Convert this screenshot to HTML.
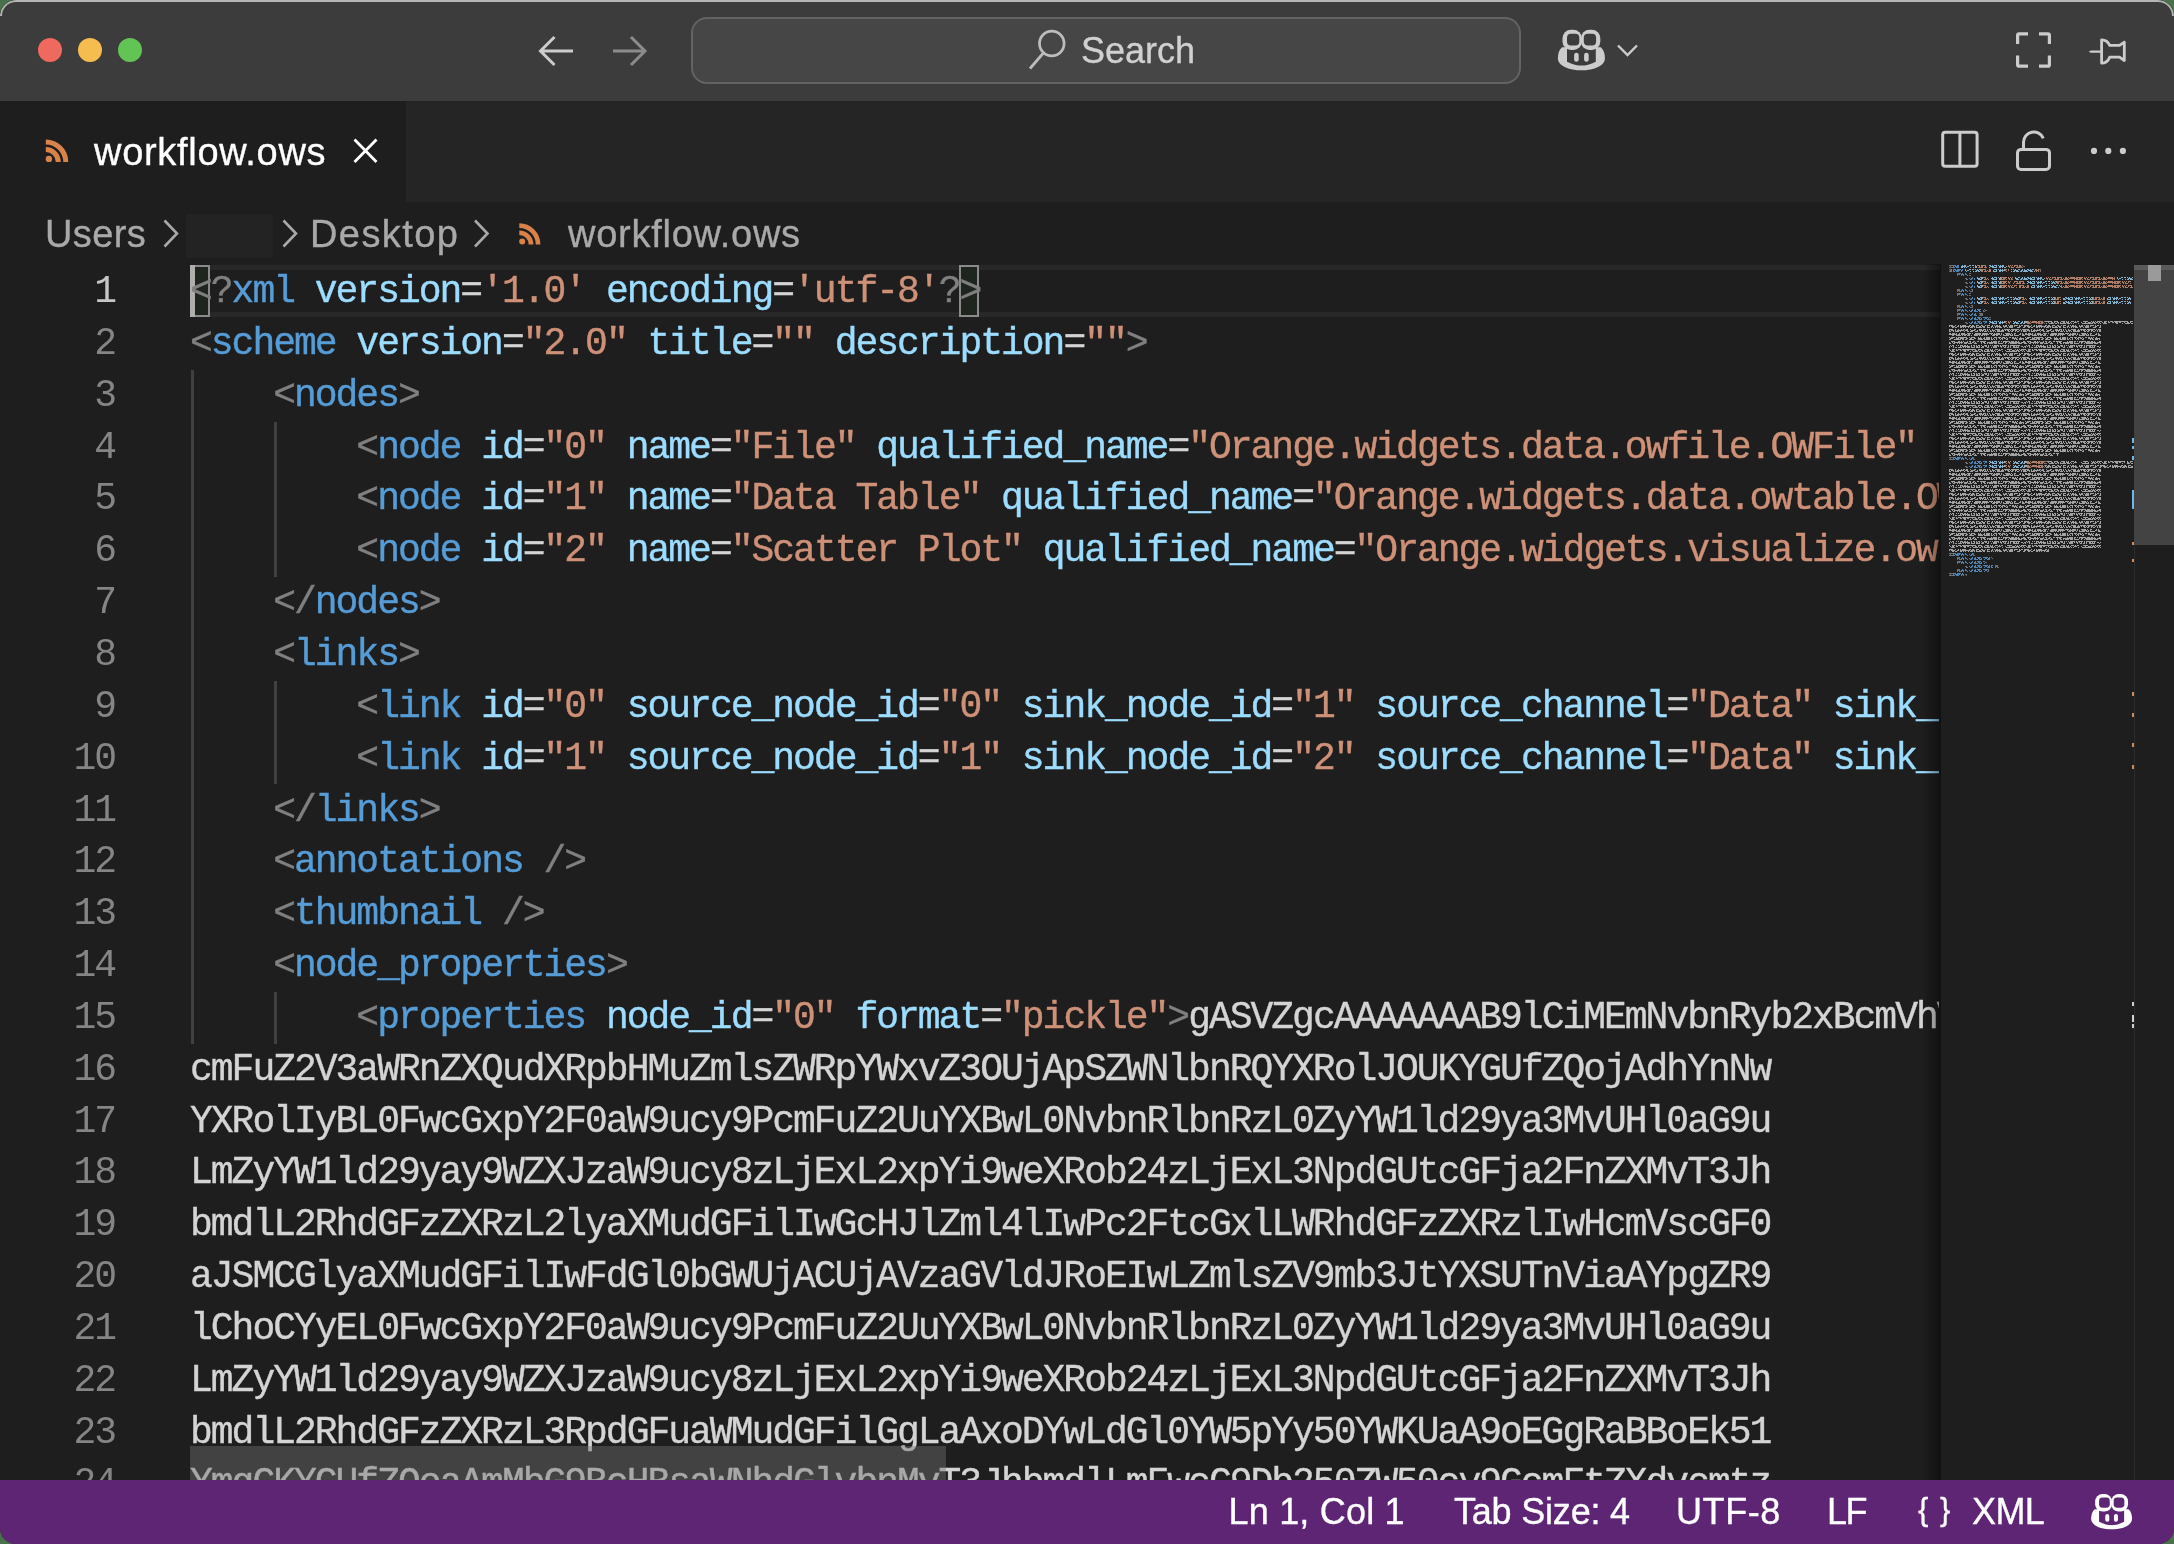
<!DOCTYPE html>
<html><head><meta charset="utf-8">
<style>
html,body{margin:0;padding:0;width:2174px;height:1544px;overflow:hidden;background:#48714c;}
*{box-sizing:border-box;}
#win{position:absolute;left:0;top:0;width:2174px;height:1544px;border-radius:16px;overflow:hidden;background:#1e1e1e;will-change:transform;}
#title{position:absolute;left:0;top:0;width:2174px;height:101px;background:#3c3c3c;}
#topline{position:absolute;left:0;top:0;width:2174px;height:16px;border:2px solid #b5b5b5;border-bottom:none;border-radius:16px 16px 0 0;}
.dot{position:absolute;width:24px;height:24px;border-radius:50%;top:38px;}
#tabs{position:absolute;left:0;top:101px;width:2174px;height:101px;background:#252526;}
#tab{position:absolute;left:0;top:0;width:406px;height:101px;background:#1e1e1e;}
.ui{font-family:"Liberation Sans",sans-serif;-webkit-text-stroke:0.35px currentColor;}
.mono{font-family:"Liberation Mono",monospace;}
.abs{position:absolute;}
#editor{position:absolute;left:0;top:0;width:2174px;height:1480px;}
.ln{position:absolute;left:0;width:115px;text-align:right;color:#858585;font-family:"Liberation Mono",monospace;font-size:38px;letter-spacing:-2.01px;height:51.84px;line-height:51.84px;}
.ln.cur{color:#c6c6c6;}
.code{position:absolute;left:190px;height:51.84px;line-height:51.84px;font-family:"Liberation Mono",monospace;font-size:38px;letter-spacing:-2.01px;white-space:pre;color:#d4d4d4;-webkit-text-stroke:0.4px currentColor;}
.t{color:#808080}.n{color:#569cd6}.a{color:#9cdcfe}.s{color:#ce9178}.e{color:#d4d4d4}
#clip{position:absolute;left:0;top:0;width:1939px;height:1480px;overflow:hidden;}
.guide{position:absolute;width:3px;background:#404040;}
#mmwrap{position:absolute;left:1949px;top:265px;width:184px;height:1215px;overflow:hidden;}
#mm{position:absolute;left:0;top:0;transform:scale(0.16667,0.20833);transform-origin:0 0;font-family:"Liberation Mono",monospace;font-size:20px;line-height:19.2px;white-space:pre;color:#d4d4d4;font-weight:bold;}
#mm div{height:19.2px;}
#status{position:absolute;left:0;top:1480px;width:2174px;height:64px;background:#5f2575;color:#fff;font-size:36px;}
#status span{position:absolute;top:0;line-height:64px;white-space:pre;}
</style></head><body>
<div id="win">
  <div id="title">
    <div class="dot" style="left:38px;background:#ee6a5f"></div>
    <div class="dot" style="left:78px;background:#f5bd4f"></div>
    <div class="dot" style="left:118px;background:#61c454"></div>
    <!-- search box -->
    <div class="abs" style="left:691px;top:17px;width:830px;height:67px;border-radius:16px;background:#464646;border:2px solid #636363;"></div>
    <div class="abs ui" style="left:1081px;top:0;height:101px;line-height:101px;font-size:36px;color:#d0d0d0;">Search</div>
    </div>
  <div id="topline"></div>
  <div id="tabs">
    <div id="tab">
      <div class="abs ui" style="left:94px;top:1px;height:101px;line-height:101px;font-size:38px;letter-spacing:0.7px;color:#ffffff;">workflow.ows</div>
      </div>
    </div>
  <!-- breadcrumbs -->
  <div class="abs ui" style="left:0;top:202px;width:2174px;height:62px;font-size:38px;color:#a9a9a9;">
    <div class="abs" style="left:45px;top:0;line-height:64px;letter-spacing:0.4px;">Users</div>
    <div class="abs" style="left:186px;top:12px;width:87px;height:44px;background:#232323;"></div>
    <div class="abs" style="left:310px;top:0;line-height:64px;letter-spacing:1.4px;">Desktop</div>
    <div class="abs" style="left:568px;top:0;line-height:64px;letter-spacing:0.75px;">workflow.ows</div>
  </div>
  <div id="editor">
    <!-- current line highlight borders -->
    <div class="abs" style="left:190px;top:265px;width:1750px;height:52px;border-top:5px solid #282828;border-bottom:5px solid #282828;"></div>
    <div class="guide" style="left:190.5px;top:369.8px;height:673.9px"></div>
<div class="guide" style="left:273.7px;top:421.6px;height:155.5px"></div>
<div class="guide" style="left:273.7px;top:680.8px;height:103.7px"></div>
<div class="guide" style="left:273.7px;top:991.9px;height:51.8px"></div>
    <div id="clip">
      <div class="abs" style="left:190px;top:265px;width:20px;height:52px;background:#1e251e;border:2px solid #8a8a8a;"></div>
      <div class="abs" style="left:959px;top:265px;width:20px;height:52px;background:#1e251e;border:2px solid #8a8a8a;"></div>
      <div class="abs" style="left:190px;top:265px;width:5px;height:52px;background:#aeafad;"></div>
      <div class="ln cur" style="top:266.10px">1</div>
<div class="code" style="top:266.10px"><span class="t">&lt;?</span><span class="n">xml</span> <span class="a">version</span><span class="e">=</span><span class="s">'1.0'</span> <span class="a">encoding</span><span class="e">=</span><span class="s">'utf-8'</span><span class="t">?&gt;</span></div>
<div class="ln" style="top:317.94px">2</div>
<div class="code" style="top:317.94px"><span class="t">&lt;</span><span class="n">scheme</span> <span class="a">version</span><span class="e">=</span><span class="s">"2.0"</span> <span class="a">title</span><span class="e">=</span><span class="s">""</span> <span class="a">description</span><span class="e">=</span><span class="s">""</span><span class="t">&gt;</span></div>
<div class="ln" style="top:369.78px">3</div>
<div class="code" style="top:369.78px">    <span class="t">&lt;</span><span class="n">nodes</span><span class="t">&gt;</span></div>
<div class="ln" style="top:421.62px">4</div>
<div class="code" style="top:421.62px">        <span class="t">&lt;</span><span class="n">node</span> <span class="a">id</span><span class="e">=</span><span class="s">"0"</span> <span class="a">name</span><span class="e">=</span><span class="s">"File"</span> <span class="a">qualified_name</span><span class="e">=</span><span class="s">"Orange.widgets.data.owfile.OWFile"</span> <span class="a">project_name</span><span class="e">=</span><span class="s">"Orange3"</span></div>
<div class="ln" style="top:473.46px">5</div>
<div class="code" style="top:473.46px">        <span class="t">&lt;</span><span class="n">node</span> <span class="a">id</span><span class="e">=</span><span class="s">"1"</span> <span class="a">name</span><span class="e">=</span><span class="s">"Data Table"</span> <span class="a">qualified_name</span><span class="e">=</span><span class="s">"Orange.widgets.data.owtable.OWTable"</span></div>
<div class="ln" style="top:525.30px">6</div>
<div class="code" style="top:525.30px">        <span class="t">&lt;</span><span class="n">node</span> <span class="a">id</span><span class="e">=</span><span class="s">"2"</span> <span class="a">name</span><span class="e">=</span><span class="s">"Scatter Plot"</span> <span class="a">qualified_name</span><span class="e">=</span><span class="s">"Orange.widgets.visualize.owscatterplot"</span></div>
<div class="ln" style="top:577.14px">7</div>
<div class="code" style="top:577.14px">    <span class="t">&lt;/</span><span class="n">nodes</span><span class="t">&gt;</span></div>
<div class="ln" style="top:628.98px">8</div>
<div class="code" style="top:628.98px">    <span class="t">&lt;</span><span class="n">links</span><span class="t">&gt;</span></div>
<div class="ln" style="top:680.82px">9</div>
<div class="code" style="top:680.82px">        <span class="t">&lt;</span><span class="n">link</span> <span class="a">id</span><span class="e">=</span><span class="s">"0"</span> <span class="a">source_node_id</span><span class="e">=</span><span class="s">"0"</span> <span class="a">sink_node_id</span><span class="e">=</span><span class="s">"1"</span> <span class="a">source_channel</span><span class="e">=</span><span class="s">"Data"</span> <span class="a">sink_channel</span></div>
<div class="ln" style="top:732.66px">10</div>
<div class="code" style="top:732.66px">        <span class="t">&lt;</span><span class="n">link</span> <span class="a">id</span><span class="e">=</span><span class="s">"1"</span> <span class="a">source_node_id</span><span class="e">=</span><span class="s">"1"</span> <span class="a">sink_node_id</span><span class="e">=</span><span class="s">"2"</span> <span class="a">source_channel</span><span class="e">=</span><span class="s">"Data"</span> <span class="a">sink_channel</span></div>
<div class="ln" style="top:784.50px">11</div>
<div class="code" style="top:784.50px">    <span class="t">&lt;/</span><span class="n">links</span><span class="t">&gt;</span></div>
<div class="ln" style="top:836.34px">12</div>
<div class="code" style="top:836.34px">    <span class="t">&lt;</span><span class="n">annotations</span> <span class="t">/&gt;</span></div>
<div class="ln" style="top:888.18px">13</div>
<div class="code" style="top:888.18px">    <span class="t">&lt;</span><span class="n">thumbnail</span> <span class="t">/&gt;</span></div>
<div class="ln" style="top:940.02px">14</div>
<div class="code" style="top:940.02px">    <span class="t">&lt;</span><span class="n">node_properties</span><span class="t">&gt;</span></div>
<div class="ln" style="top:991.86px">15</div>
<div class="code" style="top:991.86px">        <span class="t">&lt;</span><span class="n">properties</span> <span class="a">node_id</span><span class="e">=</span><span class="s">"0"</span> <span class="a">format</span><span class="e">=</span><span class="s">"pickle"</span><span class="t">&gt;</span>gASVZgcAAAAAAAB9lCiMEmNvbnRyb2xBcmVhVmlzaWJsZZSI</div>
<div class="ln" style="top:1043.70px">16</div>
<div class="code" style="top:1043.70px">cmFuZ2V3aWRnZXQudXRpbHMuZmlsZWRpYWxvZ3OUjApSZWNlbnRQYXRolJOUKYGUfZQojAdhYnNw</div>
<div class="ln" style="top:1095.54px">17</div>
<div class="code" style="top:1095.54px">YXRolIyBL0FwcGxpY2F0aW9ucy9PcmFuZ2UuYXBwL0NvbnRlbnRzL0ZyYW1ld29ya3MvUHl0aG9u</div>
<div class="ln" style="top:1147.38px">18</div>
<div class="code" style="top:1147.38px">LmZyYW1ld29yay9WZXJzaW9ucy8zLjExL2xpYi9weXRob24zLjExL3NpdGUtcGFja2FnZXMvT3Jh</div>
<div class="ln" style="top:1199.22px">19</div>
<div class="code" style="top:1199.22px">bmdlL2RhdGFzZXRzL2lyaXMudGFilIwGcHJlZml4lIwPc2FtcGxlLWRhdGFzZXRzlIwHcmVscGF0</div>
<div class="ln" style="top:1251.06px">20</div>
<div class="code" style="top:1251.06px">aJSMCGlyaXMudGFilIwFdGl0bGWUjACUjAVzaGVldJRoEIwLZmlsZV9mb3JtYXSUTnViaAYpgZR9</div>
<div class="ln" style="top:1302.90px">21</div>
<div class="code" style="top:1302.90px">lChoCYyEL0FwcGxpY2F0aW9ucy9PcmFuZ2UuYXBwL0NvbnRlbnRzL0ZyYW1ld29ya3MvUHl0aG9u</div>
<div class="ln" style="top:1354.74px">22</div>
<div class="code" style="top:1354.74px">LmZyYW1ld29yay9WZXJzaW9ucy8zLjExL2xpYi9weXRob24zLjExL3NpdGUtcGFja2FnZXMvT3Jh</div>
<div class="ln" style="top:1406.58px">23</div>
<div class="code" style="top:1406.58px">bmdlL2RhdGFzZXRzL3RpdGFuaWMudGFilGgLaAxoDYwLdGl0YW5pYy50YWKUaA9oEGgRaBBoEk51</div>
<div class="ln" style="top:1458.42px">24</div>
<div class="code" style="top:1458.42px">YmgCKYCUfZQoaAmMbG9BcHBsaWNhdGlvbnMvT3JhbmdlLmFwcC9Db250ZW50cy9GcmFtZXdvcmtz</div>
      <div class="abs" style="left:190px;top:1446px;width:756px;height:40px;background:rgba(113,113,113,0.445);"></div>
    </div>
    <!-- minimap shadow -->
    <div class="abs" style="left:1923px;top:264px;width:18px;height:1216px;background:linear-gradient(to right, rgba(0,0,0,0), rgba(0,0,0,0.42));"></div>
    <svg class="abs" style="left:0;top:0" width="2174" height="1544"><defs><pattern id="p_t" patternUnits="userSpaceOnUse" x="1949" y="265" width="38" height="4"><path d="M0 0h2v1h-2zM1 1h1v1h-1zM0 2h2v1h-2zM2 0h2v1h-2zM2 2h2v1h-2zM4 0h1v1h-1zM5 1h1v1h-1zM7 0h1v1h-1zM6 1h2v1h-2zM6 2h2v1h-2zM8 0h2v1h-2zM8 1h2v1h-2zM8 2h1v1h-1zM10 0h1v1h-1zM10 1h1v1h-1zM10 2h2v1h-2zM12 2h2v1h-2zM14 0h2v1h-2zM15 1h1v1h-1zM15 2h1v1h-1zM16 1h2v1h-2zM17 2h1v1h-1zM19 0h1v1h-1zM18 1h1v1h-1zM19 2h1v1h-1zM20 0h2v1h-2zM20 2h2v1h-2zM22 0h2v1h-2zM23 1h1v1h-1zM22 2h2v1h-2zM24 0h1v1h-1zM24 1h1v1h-1zM24 2h2v1h-2zM26 0h2v1h-2zM26 2h1v1h-1zM28 0h2v1h-2zM28 2h1v1h-1zM30 0h2v1h-2zM31 1h1v1h-1zM30 2h2v1h-2zM32 0h2v1h-2zM32 1h2v1h-2zM32 2h2v1h-2zM35 0h1v1h-1zM34 1h1v1h-1zM34 2h2v1h-2zM36 1h2v1h-2z" fill="#6e6e6e"/></pattern><pattern id="p_n" patternUnits="userSpaceOnUse" x="1949" y="265" width="38" height="4"><path d="M0 0h1v1h-1zM1 1h1v1h-1zM0 2h2v1h-2zM2 0h1v1h-1zM2 1h1v1h-1zM2 2h1v1h-1zM4 0h2v1h-2zM4 1h1v1h-1zM4 2h2v1h-2zM6 0h1v1h-1zM6 1h2v1h-2zM7 2h1v1h-1zM8 0h2v1h-2zM8 1h2v1h-2zM8 2h2v1h-2zM10 0h2v1h-2zM10 1h1v1h-1zM13 0h1v1h-1zM12 1h2v1h-2zM12 2h1v1h-1zM14 1h1v1h-1zM14 2h1v1h-1zM16 0h1v1h-1zM16 1h2v1h-2zM18 2h1v1h-1zM20 1h1v1h-1zM21 2h1v1h-1zM23 0h1v1h-1zM22 1h2v1h-2zM22 2h1v1h-1zM25 1h1v1h-1zM25 2h1v1h-1zM26 0h1v1h-1zM26 1h1v1h-1zM26 2h2v1h-2zM28 0h2v1h-2zM29 1h1v1h-1zM28 2h1v1h-1zM30 0h2v1h-2zM30 1h1v1h-1zM30 2h2v1h-2zM32 1h1v1h-1zM32 2h1v1h-1zM34 0h2v1h-2zM35 2h1v1h-1zM36 0h2v1h-2zM36 1h2v1h-2z" fill="#4f84b4"/></pattern><pattern id="p_a" patternUnits="userSpaceOnUse" x="1949" y="265" width="38" height="4"><path d="M0 1h2v1h-2zM0 2h2v1h-2zM2 0h2v1h-2zM3 1h1v1h-1zM2 2h1v1h-1zM5 0h1v1h-1zM4 1h2v1h-2zM5 2h1v1h-1zM7 0h1v1h-1zM6 1h1v1h-1zM6 2h2v1h-2zM8 0h2v1h-2zM9 1h1v1h-1zM8 2h2v1h-2zM11 0h1v1h-1zM13 0h1v1h-1zM12 1h2v1h-2zM12 2h2v1h-2zM15 0h1v1h-1zM14 1h2v1h-2zM15 2h1v1h-1zM16 0h1v1h-1zM16 1h1v1h-1zM17 2h1v1h-1zM18 1h2v1h-2zM20 0h2v1h-2zM21 2h1v1h-1zM23 0h1v1h-1zM24 0h1v1h-1zM24 2h1v1h-1zM26 0h1v1h-1zM27 1h1v1h-1zM26 2h2v1h-2zM28 0h1v1h-1zM28 1h2v1h-2zM29 2h1v1h-1zM31 0h1v1h-1zM30 1h1v1h-1zM30 2h2v1h-2zM32 0h1v1h-1zM33 2h1v1h-1zM35 0h1v1h-1zM34 1h2v1h-2zM34 2h1v1h-1zM37 0h1v1h-1zM37 1h1v1h-1zM36 2h2v1h-2z" fill="#86b4d0"/></pattern><pattern id="p_s" patternUnits="userSpaceOnUse" x="1949" y="265" width="38" height="4"><path d="M0 1h1v1h-1zM1 2h1v1h-1zM2 0h2v1h-2zM2 1h2v1h-2zM2 2h2v1h-2zM5 0h1v1h-1zM4 1h1v1h-1zM4 2h2v1h-2zM7 0h1v1h-1zM6 1h2v1h-2zM8 0h2v1h-2zM8 1h2v1h-2zM10 0h2v1h-2zM10 1h2v1h-2zM11 2h1v1h-1zM13 0h1v1h-1zM12 1h2v1h-2zM13 2h1v1h-1zM14 0h2v1h-2zM14 1h1v1h-1zM14 2h2v1h-2zM16 0h2v1h-2zM16 1h2v1h-2zM16 2h2v1h-2zM18 0h2v1h-2zM18 1h1v1h-1zM19 2h1v1h-1zM21 0h1v1h-1zM21 1h1v1h-1zM23 0h1v1h-1zM22 1h1v1h-1zM22 2h1v1h-1zM25 0h1v1h-1zM24 1h1v1h-1zM24 2h2v1h-2zM27 0h1v1h-1zM27 1h1v1h-1zM26 2h1v1h-1zM28 0h2v1h-2zM29 2h1v1h-1zM30 0h1v1h-1zM30 1h1v1h-1zM30 2h2v1h-2zM32 0h2v1h-2zM32 1h2v1h-2zM32 2h2v1h-2zM34 0h2v1h-2zM35 2h1v1h-1zM36 0h1v1h-1zM36 1h1v1h-1zM36 2h2v1h-2z" fill="#ae7e68"/></pattern><pattern id="p_e" patternUnits="userSpaceOnUse" x="1949" y="265" width="38" height="4"><path d="M0 0h2v1h-2zM0 1h2v1h-2zM2 0h2v1h-2zM3 1h1v1h-1zM2 2h2v1h-2zM4 0h2v1h-2zM7 0h1v1h-1zM6 1h2v1h-2zM8 0h1v1h-1zM9 2h1v1h-1zM11 2h1v1h-1zM13 0h1v1h-1zM12 1h2v1h-2zM12 2h2v1h-2zM14 1h1v1h-1zM15 2h1v1h-1zM17 0h1v1h-1zM16 1h2v1h-2zM19 1h1v1h-1zM18 2h1v1h-1zM20 0h2v1h-2zM20 1h2v1h-2zM20 2h2v1h-2zM22 0h1v1h-1zM22 1h2v1h-2zM23 2h1v1h-1zM25 1h1v1h-1zM24 2h1v1h-1zM26 0h1v1h-1zM26 1h2v1h-2zM26 2h2v1h-2zM28 0h2v1h-2zM29 1h1v1h-1zM28 2h2v1h-2zM30 0h2v1h-2zM31 1h1v1h-1zM30 2h1v1h-1zM32 0h2v1h-2zM32 1h2v1h-2zM32 2h1v1h-1zM34 0h1v1h-1zM35 1h1v1h-1zM36 0h1v1h-1zM36 1h2v1h-2zM37 2h1v1h-1z" fill="#a8a8a8"/></pattern><pattern id="p_p" patternUnits="userSpaceOnUse" x="1949" y="265" width="76" height="28"><path d="M0 0h1v1h-1zM1 1h1v1h-1zM3 0h1v1h-1zM3 1h1v1h-1zM2 2h2v1h-2zM4 0h2v1h-2zM4 1h1v1h-1zM4 2h2v1h-2zM7 0h1v1h-1zM7 1h1v1h-1zM9 0h1v1h-1zM8 1h1v1h-1zM10 0h2v1h-2zM11 1h1v1h-1zM13 0h1v1h-1zM12 1h1v1h-1zM14 0h2v1h-2zM14 1h2v1h-2zM15 2h1v1h-1zM16 0h2v1h-2zM16 1h1v1h-1zM16 2h1v1h-1zM18 0h2v1h-2zM18 1h2v1h-2zM20 0h2v1h-2zM21 2h1v1h-1zM22 0h2v1h-2zM23 1h1v1h-1zM24 0h2v1h-2zM24 2h2v1h-2zM26 0h1v1h-1zM26 1h2v1h-2zM26 2h2v1h-2zM29 0h1v1h-1zM29 1h1v1h-1zM28 2h1v1h-1zM30 0h2v1h-2zM30 2h2v1h-2zM32 0h1v1h-1zM32 1h2v1h-2zM33 2h1v1h-1zM35 1h1v1h-1zM35 2h1v1h-1zM36 0h2v1h-2zM36 2h2v1h-2zM38 0h2v1h-2zM38 1h2v1h-2zM38 2h2v1h-2zM41 0h1v1h-1zM41 1h1v1h-1zM40 2h1v1h-1zM43 0h1v1h-1zM42 1h2v1h-2zM42 2h2v1h-2zM45 1h1v1h-1zM44 2h1v1h-1zM46 0h2v1h-2zM46 2h1v1h-1zM48 0h1v1h-1zM49 1h1v1h-1zM48 2h1v1h-1zM50 0h1v1h-1zM50 1h2v1h-2zM52 0h2v1h-2zM53 2h1v1h-1zM56 1h1v1h-1zM57 2h1v1h-1zM58 0h2v1h-2zM58 2h2v1h-2zM60 0h2v1h-2zM60 1h1v1h-1zM60 2h2v1h-2zM62 0h1v1h-1zM63 1h1v1h-1zM62 2h2v1h-2zM64 1h2v1h-2zM64 2h2v1h-2zM66 0h1v1h-1zM67 1h1v1h-1zM66 2h2v1h-2zM68 0h1v1h-1zM68 1h2v1h-2zM69 2h1v1h-1zM70 0h1v1h-1zM71 1h1v1h-1zM70 2h1v1h-1zM72 0h2v1h-2zM72 1h1v1h-1zM73 2h1v1h-1zM74 0h2v1h-2zM74 1h1v1h-1zM75 2h1v1h-1zM0 4h2v1h-2zM0 5h1v1h-1zM2 4h2v1h-2zM2 5h2v1h-2zM3 6h1v1h-1zM4 5h2v1h-2zM4 6h1v1h-1zM6 4h1v1h-1zM6 6h2v1h-2zM9 4h1v1h-1zM8 5h2v1h-2zM11 4h1v1h-1zM11 5h1v1h-1zM11 6h1v1h-1zM13 4h1v1h-1zM12 5h2v1h-2zM12 6h1v1h-1zM14 4h2v1h-2zM14 5h2v1h-2zM14 6h1v1h-1zM16 4h1v1h-1zM16 5h2v1h-2zM16 6h1v1h-1zM18 5h2v1h-2zM19 6h1v1h-1zM20 4h2v1h-2zM20 5h1v1h-1zM21 6h1v1h-1zM23 4h1v1h-1zM22 5h2v1h-2zM22 6h2v1h-2zM24 4h1v1h-1zM24 5h2v1h-2zM25 6h1v1h-1zM27 4h1v1h-1zM27 5h1v1h-1zM27 6h1v1h-1zM28 4h2v1h-2zM28 6h2v1h-2zM30 5h2v1h-2zM30 6h2v1h-2zM32 4h2v1h-2zM33 5h1v1h-1zM32 6h1v1h-1zM34 5h2v1h-2zM34 6h2v1h-2zM36 4h1v1h-1zM38 4h2v1h-2zM38 5h1v1h-1zM38 6h2v1h-2zM40 4h1v1h-1zM40 6h1v1h-1zM43 4h1v1h-1zM42 5h2v1h-2zM42 6h1v1h-1zM45 4h1v1h-1zM44 6h1v1h-1zM47 4h1v1h-1zM46 5h2v1h-2zM46 6h1v1h-1zM48 4h1v1h-1zM48 5h2v1h-2zM48 6h1v1h-1zM50 4h1v1h-1zM50 5h2v1h-2zM50 6h2v1h-2zM52 6h1v1h-1zM54 4h1v1h-1zM54 5h2v1h-2zM55 6h1v1h-1zM56 4h2v1h-2zM56 5h2v1h-2zM59 4h1v1h-1zM58 6h1v1h-1zM61 4h1v1h-1zM60 5h2v1h-2zM60 6h2v1h-2zM62 4h2v1h-2zM62 5h2v1h-2zM62 6h2v1h-2zM65 4h1v1h-1zM65 5h1v1h-1zM66 4h2v1h-2zM68 4h1v1h-1zM68 6h2v1h-2zM70 4h1v1h-1zM70 5h2v1h-2zM70 6h1v1h-1zM72 4h2v1h-2zM75 4h1v1h-1zM75 5h1v1h-1zM74 6h2v1h-2zM0 8h2v1h-2zM0 9h1v1h-1zM0 10h2v1h-2zM2 8h2v1h-2zM2 9h2v1h-2zM4 9h1v1h-1zM4 10h1v1h-1zM6 8h1v1h-1zM6 9h1v1h-1zM6 10h2v1h-2zM9 8h1v1h-1zM8 9h2v1h-2zM8 10h2v1h-2zM10 9h2v1h-2zM11 10h1v1h-1zM12 8h1v1h-1zM12 9h2v1h-2zM14 8h2v1h-2zM14 9h1v1h-1zM15 10h1v1h-1zM17 8h1v1h-1zM16 9h2v1h-2zM18 8h1v1h-1zM18 9h1v1h-1zM18 10h2v1h-2zM21 8h1v1h-1zM21 10h1v1h-1zM22 9h2v1h-2zM22 10h2v1h-2zM25 8h1v1h-1zM24 9h2v1h-2zM26 8h1v1h-1zM26 10h2v1h-2zM28 9h1v1h-1zM28 10h1v1h-1zM30 8h2v1h-2zM30 9h2v1h-2zM31 10h1v1h-1zM32 8h1v1h-1zM32 9h2v1h-2zM33 10h1v1h-1zM34 8h2v1h-2zM34 9h1v1h-1zM35 10h1v1h-1zM36 8h1v1h-1zM36 9h1v1h-1zM36 10h2v1h-2zM38 8h1v1h-1zM38 9h1v1h-1zM39 10h1v1h-1zM40 8h1v1h-1zM41 9h1v1h-1zM41 10h1v1h-1zM43 8h1v1h-1zM43 9h1v1h-1zM42 10h1v1h-1zM44 9h2v1h-2zM44 10h1v1h-1zM46 8h2v1h-2zM46 10h1v1h-1zM48 8h2v1h-2zM48 9h2v1h-2zM48 10h2v1h-2zM50 8h1v1h-1zM50 9h1v1h-1zM50 10h2v1h-2zM53 8h1v1h-1zM52 9h2v1h-2zM52 10h2v1h-2zM55 8h1v1h-1zM54 9h1v1h-1zM54 10h1v1h-1zM56 8h2v1h-2zM56 9h1v1h-1zM58 8h2v1h-2zM58 9h2v1h-2zM59 10h1v1h-1zM60 8h1v1h-1zM61 9h1v1h-1zM60 10h1v1h-1zM62 8h2v1h-2zM63 9h1v1h-1zM62 10h2v1h-2zM64 8h2v1h-2zM64 9h1v1h-1zM66 8h2v1h-2zM66 9h2v1h-2zM66 10h1v1h-1zM68 8h2v1h-2zM68 10h2v1h-2zM71 8h1v1h-1zM70 9h1v1h-1zM73 8h1v1h-1zM72 9h1v1h-1zM72 10h1v1h-1zM74 8h2v1h-2zM74 9h2v1h-2zM74 10h2v1h-2zM0 12h2v1h-2zM0 13h2v1h-2zM3 12h1v1h-1zM2 13h2v1h-2zM3 14h1v1h-1zM4 12h2v1h-2zM4 13h2v1h-2zM4 14h1v1h-1zM7 12h1v1h-1zM6 13h2v1h-2zM7 14h1v1h-1zM9 13h1v1h-1zM8 14h2v1h-2zM10 12h1v1h-1zM10 13h1v1h-1zM10 14h2v1h-2zM12 12h2v1h-2zM12 13h2v1h-2zM13 14h1v1h-1zM14 12h2v1h-2zM14 13h2v1h-2zM15 14h1v1h-1zM16 13h2v1h-2zM16 14h1v1h-1zM18 12h2v1h-2zM19 13h1v1h-1zM18 14h2v1h-2zM20 12h2v1h-2zM20 13h1v1h-1zM20 14h1v1h-1zM23 12h1v1h-1zM22 14h1v1h-1zM25 13h1v1h-1zM25 14h1v1h-1zM26 12h2v1h-2zM26 13h2v1h-2zM26 14h2v1h-2zM28 12h2v1h-2zM28 13h2v1h-2zM28 14h1v1h-1zM30 12h2v1h-2zM30 13h2v1h-2zM30 14h1v1h-1zM33 12h1v1h-1zM33 13h1v1h-1zM32 14h2v1h-2zM34 12h2v1h-2zM34 13h2v1h-2zM35 14h1v1h-1zM36 12h2v1h-2zM36 13h2v1h-2zM37 14h1v1h-1zM38 12h1v1h-1zM38 13h2v1h-2zM40 12h2v1h-2zM42 12h2v1h-2zM42 13h1v1h-1zM43 14h1v1h-1zM45 12h1v1h-1zM44 13h2v1h-2zM44 14h2v1h-2zM47 12h1v1h-1zM46 13h2v1h-2zM47 14h1v1h-1zM48 12h2v1h-2zM48 13h2v1h-2zM48 14h1v1h-1zM50 12h1v1h-1zM50 13h1v1h-1zM51 14h1v1h-1zM52 12h1v1h-1zM52 13h1v1h-1zM54 13h1v1h-1zM54 14h2v1h-2zM56 12h2v1h-2zM57 13h1v1h-1zM56 14h2v1h-2zM58 12h2v1h-2zM58 13h2v1h-2zM58 14h2v1h-2zM60 12h1v1h-1zM60 13h2v1h-2zM61 14h1v1h-1zM62 12h1v1h-1zM63 13h1v1h-1zM62 14h2v1h-2zM65 12h1v1h-1zM65 13h1v1h-1zM65 14h1v1h-1zM66 12h1v1h-1zM66 14h2v1h-2zM68 14h2v1h-2zM71 12h1v1h-1zM70 13h2v1h-2zM73 12h1v1h-1zM73 13h1v1h-1zM73 14h1v1h-1zM74 13h1v1h-1zM74 14h2v1h-2zM0 16h1v1h-1zM1 17h1v1h-1zM0 18h2v1h-2zM2 16h2v1h-2zM2 17h2v1h-2zM4 16h2v1h-2zM5 18h1v1h-1zM7 16h1v1h-1zM7 17h1v1h-1zM6 18h2v1h-2zM9 16h1v1h-1zM8 17h2v1h-2zM8 18h2v1h-2zM10 16h2v1h-2zM11 17h1v1h-1zM10 18h2v1h-2zM12 16h2v1h-2zM12 17h2v1h-2zM13 18h1v1h-1zM14 16h2v1h-2zM14 17h1v1h-1zM14 18h1v1h-1zM16 16h2v1h-2zM17 17h1v1h-1zM16 18h2v1h-2zM18 17h1v1h-1zM20 16h1v1h-1zM21 17h1v1h-1zM20 18h2v1h-2zM22 16h2v1h-2zM22 17h1v1h-1zM22 18h2v1h-2zM24 16h2v1h-2zM25 17h1v1h-1zM24 18h1v1h-1zM26 17h1v1h-1zM29 16h1v1h-1zM29 17h1v1h-1zM29 18h1v1h-1zM31 16h1v1h-1zM30 17h2v1h-2zM30 18h2v1h-2zM32 17h1v1h-1zM32 18h2v1h-2zM35 16h1v1h-1zM34 17h2v1h-2zM35 18h1v1h-1zM37 16h1v1h-1zM37 17h1v1h-1zM36 18h2v1h-2zM38 16h2v1h-2zM38 17h2v1h-2zM38 18h2v1h-2zM40 16h1v1h-1zM40 17h1v1h-1zM40 18h1v1h-1zM42 16h1v1h-1zM42 17h1v1h-1zM42 18h2v1h-2zM45 16h1v1h-1zM44 17h1v1h-1zM45 18h1v1h-1zM46 16h2v1h-2zM47 17h1v1h-1zM47 18h1v1h-1zM49 16h1v1h-1zM50 16h2v1h-2zM50 17h1v1h-1zM51 18h1v1h-1zM53 16h1v1h-1zM52 17h2v1h-2zM53 18h1v1h-1zM54 16h2v1h-2zM55 17h1v1h-1zM57 16h1v1h-1zM56 17h1v1h-1zM57 18h1v1h-1zM58 17h1v1h-1zM58 18h1v1h-1zM60 16h2v1h-2zM63 16h1v1h-1zM63 17h1v1h-1zM64 16h1v1h-1zM64 17h2v1h-2zM65 18h1v1h-1zM66 16h1v1h-1zM66 17h2v1h-2zM67 18h1v1h-1zM68 16h1v1h-1zM68 18h1v1h-1zM71 16h1v1h-1zM70 17h2v1h-2zM70 18h2v1h-2zM72 17h2v1h-2zM72 18h1v1h-1zM74 17h1v1h-1zM74 18h1v1h-1zM0 21h1v1h-1zM0 22h2v1h-2zM2 20h2v1h-2zM3 21h1v1h-1zM4 20h2v1h-2zM5 21h1v1h-1zM4 22h2v1h-2zM6 21h2v1h-2zM9 20h1v1h-1zM8 21h2v1h-2zM8 22h1v1h-1zM10 20h1v1h-1zM10 21h2v1h-2zM10 22h1v1h-1zM12 20h1v1h-1zM12 21h2v1h-2zM12 22h1v1h-1zM14 20h1v1h-1zM15 21h1v1h-1zM15 22h1v1h-1zM16 21h2v1h-2zM16 22h2v1h-2zM18 20h1v1h-1zM18 21h1v1h-1zM19 22h1v1h-1zM20 20h2v1h-2zM21 21h1v1h-1zM20 22h2v1h-2zM23 21h1v1h-1zM22 22h1v1h-1zM24 20h2v1h-2zM24 21h1v1h-1zM25 22h1v1h-1zM26 21h1v1h-1zM26 22h2v1h-2zM28 20h2v1h-2zM31 20h1v1h-1zM32 20h2v1h-2zM32 21h1v1h-1zM32 22h1v1h-1zM34 20h2v1h-2zM34 21h2v1h-2zM35 22h1v1h-1zM36 20h1v1h-1zM36 22h1v1h-1zM38 21h2v1h-2zM38 22h1v1h-1zM40 21h2v1h-2zM40 22h2v1h-2zM42 20h1v1h-1zM42 21h2v1h-2zM42 22h2v1h-2zM44 20h2v1h-2zM44 21h2v1h-2zM45 22h1v1h-1zM46 20h2v1h-2zM46 21h2v1h-2zM46 22h2v1h-2zM49 20h1v1h-1zM49 21h1v1h-1zM49 22h1v1h-1zM50 20h1v1h-1zM50 22h2v1h-2zM52 20h1v1h-1zM52 22h2v1h-2zM54 20h2v1h-2zM54 21h1v1h-1zM56 20h2v1h-2zM56 21h2v1h-2zM56 22h1v1h-1zM58 20h2v1h-2zM59 22h1v1h-1zM60 20h1v1h-1zM60 21h2v1h-2zM61 22h1v1h-1zM62 20h2v1h-2zM62 21h2v1h-2zM62 22h2v1h-2zM64 20h1v1h-1zM64 21h2v1h-2zM64 22h2v1h-2zM66 20h2v1h-2zM66 21h2v1h-2zM66 22h2v1h-2zM69 20h1v1h-1zM68 21h2v1h-2zM69 22h1v1h-1zM70 21h1v1h-1zM70 22h2v1h-2zM72 21h2v1h-2zM72 22h1v1h-1zM74 20h2v1h-2zM74 21h2v1h-2zM75 22h1v1h-1zM1 24h1v1h-1zM0 25h1v1h-1zM0 26h1v1h-1zM3 24h1v1h-1zM2 25h1v1h-1zM4 24h1v1h-1zM4 25h1v1h-1zM4 26h1v1h-1zM7 24h1v1h-1zM6 26h2v1h-2zM9 24h1v1h-1zM9 26h1v1h-1zM11 24h1v1h-1zM11 25h1v1h-1zM10 26h2v1h-2zM12 24h2v1h-2zM13 25h1v1h-1zM12 26h1v1h-1zM15 24h1v1h-1zM14 25h2v1h-2zM14 26h1v1h-1zM16 24h1v1h-1zM16 25h2v1h-2zM16 26h1v1h-1zM18 24h1v1h-1zM18 25h2v1h-2zM18 26h2v1h-2zM20 25h1v1h-1zM20 26h1v1h-1zM22 24h1v1h-1zM22 25h1v1h-1zM22 26h2v1h-2zM24 24h2v1h-2zM25 25h1v1h-1zM24 26h2v1h-2zM27 24h1v1h-1zM27 25h1v1h-1zM27 26h1v1h-1zM29 24h1v1h-1zM28 25h1v1h-1zM28 26h2v1h-2zM30 24h1v1h-1zM30 25h1v1h-1zM30 26h1v1h-1zM32 24h1v1h-1zM33 25h1v1h-1zM32 26h2v1h-2zM35 24h1v1h-1zM34 25h1v1h-1zM34 26h1v1h-1zM36 24h2v1h-2zM36 25h2v1h-2zM39 24h1v1h-1zM39 25h1v1h-1zM38 26h2v1h-2zM41 24h1v1h-1zM43 24h1v1h-1zM42 26h1v1h-1zM45 24h1v1h-1zM44 25h2v1h-2zM44 26h2v1h-2zM46 24h2v1h-2zM46 25h2v1h-2zM46 26h2v1h-2zM48 24h2v1h-2zM49 25h1v1h-1zM51 24h1v1h-1zM51 25h1v1h-1zM53 24h1v1h-1zM52 25h1v1h-1zM52 26h1v1h-1zM54 24h2v1h-2zM54 25h1v1h-1zM55 26h1v1h-1zM56 24h2v1h-2zM56 25h1v1h-1zM56 26h1v1h-1zM59 24h1v1h-1zM59 25h1v1h-1zM58 26h2v1h-2zM61 24h1v1h-1zM61 25h1v1h-1zM61 26h1v1h-1zM62 24h2v1h-2zM64 24h2v1h-2zM64 25h2v1h-2zM64 26h2v1h-2zM66 24h2v1h-2zM67 25h1v1h-1zM66 26h2v1h-2zM68 24h2v1h-2zM69 25h1v1h-1zM68 26h2v1h-2zM70 24h1v1h-1zM72 25h2v1h-2zM75 25h1v1h-1zM74 26h1v1h-1z" fill="#a2a2a2"/></pattern></defs><rect x="1949" y="265" width="4" height="4" fill="url(#p_t)"/><rect x="1953" y="265" width="6" height="4" fill="url(#p_n)"/><rect x="1961" y="265" width="14" height="4" fill="url(#p_a)"/><rect x="1975" y="265" width="2" height="4" fill="url(#p_e)"/><rect x="1977" y="265" width="10" height="4" fill="url(#p_s)"/><rect x="1989" y="265" width="16" height="4" fill="url(#p_a)"/><rect x="2005" y="265" width="2" height="4" fill="url(#p_e)"/><rect x="2007" y="265" width="14" height="4" fill="url(#p_s)"/><rect x="2021" y="265" width="4" height="4" fill="url(#p_t)"/><rect x="1949" y="269" width="2" height="4" fill="url(#p_t)"/><rect x="1951" y="269" width="12" height="4" fill="url(#p_n)"/><rect x="1965" y="269" width="14" height="4" fill="url(#p_a)"/><rect x="1979" y="269" width="2" height="4" fill="url(#p_e)"/><rect x="1981" y="269" width="10" height="4" fill="url(#p_s)"/><rect x="1993" y="269" width="10" height="4" fill="url(#p_a)"/><rect x="2003" y="269" width="2" height="4" fill="url(#p_e)"/><rect x="2005" y="269" width="4" height="4" fill="url(#p_s)"/><rect x="2011" y="269" width="22" height="4" fill="url(#p_a)"/><rect x="2033" y="269" width="2" height="4" fill="url(#p_e)"/><rect x="2035" y="269" width="4" height="4" fill="url(#p_s)"/><rect x="2039" y="269" width="2" height="4" fill="url(#p_t)"/><rect x="1957" y="273" width="2" height="4" fill="url(#p_t)"/><rect x="1959" y="273" width="10" height="4" fill="url(#p_n)"/><rect x="1969" y="273" width="2" height="4" fill="url(#p_t)"/><rect x="1965" y="277" width="2" height="4" fill="url(#p_t)"/><rect x="1967" y="277" width="8" height="4" fill="url(#p_n)"/><rect x="1977" y="277" width="4" height="4" fill="url(#p_a)"/><rect x="1981" y="277" width="2" height="4" fill="url(#p_e)"/><rect x="1983" y="277" width="6" height="4" fill="url(#p_s)"/><rect x="1991" y="277" width="8" height="4" fill="url(#p_a)"/><rect x="1999" y="277" width="2" height="4" fill="url(#p_e)"/><rect x="2001" y="277" width="12" height="4" fill="url(#p_s)"/><rect x="2015" y="277" width="28" height="4" fill="url(#p_a)"/><rect x="2043" y="277" width="2" height="4" fill="url(#p_e)"/><rect x="2045" y="277" width="70" height="4" fill="url(#p_s)"/><rect x="2117" y="277" width="16" height="4" fill="url(#p_a)"/><rect x="1965" y="281" width="2" height="4" fill="url(#p_t)"/><rect x="1967" y="281" width="8" height="4" fill="url(#p_n)"/><rect x="1977" y="281" width="4" height="4" fill="url(#p_a)"/><rect x="1981" y="281" width="2" height="4" fill="url(#p_e)"/><rect x="1983" y="281" width="6" height="4" fill="url(#p_s)"/><rect x="1991" y="281" width="8" height="4" fill="url(#p_a)"/><rect x="1999" y="281" width="2" height="4" fill="url(#p_e)"/><rect x="2001" y="281" width="10" height="4" fill="url(#p_s)"/><rect x="2013" y="281" width="12" height="4" fill="url(#p_s)"/><rect x="2027" y="281" width="28" height="4" fill="url(#p_a)"/><rect x="2055" y="281" width="2" height="4" fill="url(#p_e)"/><rect x="2057" y="281" width="74" height="4" fill="url(#p_s)"/><rect x="1965" y="285" width="2" height="4" fill="url(#p_t)"/><rect x="1967" y="285" width="8" height="4" fill="url(#p_n)"/><rect x="1977" y="285" width="4" height="4" fill="url(#p_a)"/><rect x="1981" y="285" width="2" height="4" fill="url(#p_e)"/><rect x="1983" y="285" width="6" height="4" fill="url(#p_s)"/><rect x="1991" y="285" width="8" height="4" fill="url(#p_a)"/><rect x="1999" y="285" width="2" height="4" fill="url(#p_e)"/><rect x="2001" y="285" width="16" height="4" fill="url(#p_s)"/><rect x="2019" y="285" width="10" height="4" fill="url(#p_s)"/><rect x="2031" y="285" width="28" height="4" fill="url(#p_a)"/><rect x="2059" y="285" width="2" height="4" fill="url(#p_e)"/><rect x="2061" y="285" width="72" height="4" fill="url(#p_s)"/><rect x="1957" y="289" width="4" height="4" fill="url(#p_t)"/><rect x="1961" y="289" width="10" height="4" fill="url(#p_n)"/><rect x="1971" y="289" width="2" height="4" fill="url(#p_t)"/><rect x="1957" y="293" width="2" height="4" fill="url(#p_t)"/><rect x="1959" y="293" width="10" height="4" fill="url(#p_n)"/><rect x="1969" y="293" width="2" height="4" fill="url(#p_t)"/><rect x="1965" y="297" width="2" height="4" fill="url(#p_t)"/><rect x="1967" y="297" width="8" height="4" fill="url(#p_n)"/><rect x="1977" y="297" width="4" height="4" fill="url(#p_a)"/><rect x="1981" y="297" width="2" height="4" fill="url(#p_e)"/><rect x="1983" y="297" width="6" height="4" fill="url(#p_s)"/><rect x="1991" y="297" width="28" height="4" fill="url(#p_a)"/><rect x="2019" y="297" width="2" height="4" fill="url(#p_e)"/><rect x="2021" y="297" width="6" height="4" fill="url(#p_s)"/><rect x="2029" y="297" width="24" height="4" fill="url(#p_a)"/><rect x="2053" y="297" width="2" height="4" fill="url(#p_e)"/><rect x="2055" y="297" width="6" height="4" fill="url(#p_s)"/><rect x="2063" y="297" width="28" height="4" fill="url(#p_a)"/><rect x="2091" y="297" width="2" height="4" fill="url(#p_e)"/><rect x="2093" y="297" width="12" height="4" fill="url(#p_s)"/><rect x="2107" y="297" width="24" height="4" fill="url(#p_a)"/><rect x="1965" y="301" width="2" height="4" fill="url(#p_t)"/><rect x="1967" y="301" width="8" height="4" fill="url(#p_n)"/><rect x="1977" y="301" width="4" height="4" fill="url(#p_a)"/><rect x="1981" y="301" width="2" height="4" fill="url(#p_e)"/><rect x="1983" y="301" width="6" height="4" fill="url(#p_s)"/><rect x="1991" y="301" width="28" height="4" fill="url(#p_a)"/><rect x="2019" y="301" width="2" height="4" fill="url(#p_e)"/><rect x="2021" y="301" width="6" height="4" fill="url(#p_s)"/><rect x="2029" y="301" width="24" height="4" fill="url(#p_a)"/><rect x="2053" y="301" width="2" height="4" fill="url(#p_e)"/><rect x="2055" y="301" width="6" height="4" fill="url(#p_s)"/><rect x="2063" y="301" width="28" height="4" fill="url(#p_a)"/><rect x="2091" y="301" width="2" height="4" fill="url(#p_e)"/><rect x="2093" y="301" width="12" height="4" fill="url(#p_s)"/><rect x="2107" y="301" width="24" height="4" fill="url(#p_a)"/><rect x="1957" y="305" width="4" height="4" fill="url(#p_t)"/><rect x="1961" y="305" width="10" height="4" fill="url(#p_n)"/><rect x="1971" y="305" width="2" height="4" fill="url(#p_t)"/><rect x="1957" y="309" width="2" height="4" fill="url(#p_t)"/><rect x="1959" y="309" width="22" height="4" fill="url(#p_n)"/><rect x="1983" y="309" width="4" height="4" fill="url(#p_t)"/><rect x="1957" y="313" width="2" height="4" fill="url(#p_t)"/><rect x="1959" y="313" width="18" height="4" fill="url(#p_n)"/><rect x="1979" y="313" width="4" height="4" fill="url(#p_t)"/><rect x="1957" y="317" width="2" height="4" fill="url(#p_t)"/><rect x="1959" y="317" width="30" height="4" fill="url(#p_n)"/><rect x="1989" y="317" width="2" height="4" fill="url(#p_t)"/><rect x="1965" y="321" width="2" height="4" fill="url(#p_t)"/><rect x="1967" y="321" width="20" height="4" fill="url(#p_n)"/><rect x="1989" y="321" width="14" height="4" fill="url(#p_a)"/><rect x="2003" y="321" width="2" height="4" fill="url(#p_e)"/><rect x="2005" y="321" width="6" height="4" fill="url(#p_s)"/><rect x="2013" y="321" width="12" height="4" fill="url(#p_a)"/><rect x="2025" y="321" width="2" height="4" fill="url(#p_e)"/><rect x="2027" y="321" width="16" height="4" fill="url(#p_s)"/><rect x="2043" y="321" width="2" height="4" fill="url(#p_t)"/><rect x="2045" y="321" width="88" height="4" fill="url(#p_p)"/><rect x="1949" y="325" width="152" height="4" fill="url(#p_p)"/><rect x="1949" y="329" width="152" height="4" fill="url(#p_p)"/><rect x="1949" y="333" width="152" height="4" fill="url(#p_p)"/><rect x="1949" y="337" width="152" height="4" fill="url(#p_p)"/><rect x="1949" y="341" width="152" height="4" fill="url(#p_p)"/><rect x="1949" y="345" width="152" height="4" fill="url(#p_p)"/><rect x="1949" y="349" width="152" height="4" fill="url(#p_p)"/><rect x="1949" y="353" width="152" height="4" fill="url(#p_p)"/><rect x="1949" y="357" width="152" height="4" fill="url(#p_p)"/><rect x="1949" y="361" width="152" height="4" fill="url(#p_p)"/><rect x="1949" y="365" width="152" height="4" fill="url(#p_p)"/><rect x="1949" y="369" width="152" height="4" fill="url(#p_p)"/><rect x="1949" y="373" width="152" height="4" fill="url(#p_p)"/><rect x="1949" y="377" width="152" height="4" fill="url(#p_p)"/><rect x="1949" y="381" width="152" height="4" fill="url(#p_p)"/><rect x="1949" y="385" width="152" height="4" fill="url(#p_p)"/><rect x="1949" y="389" width="152" height="4" fill="url(#p_p)"/><rect x="1949" y="393" width="152" height="4" fill="url(#p_p)"/><rect x="1949" y="397" width="152" height="4" fill="url(#p_p)"/><rect x="1949" y="401" width="152" height="4" fill="url(#p_p)"/><rect x="1949" y="405" width="152" height="4" fill="url(#p_p)"/><rect x="1949" y="409" width="152" height="4" fill="url(#p_p)"/><rect x="1949" y="413" width="152" height="4" fill="url(#p_p)"/><rect x="1949" y="417" width="152" height="4" fill="url(#p_p)"/><rect x="1949" y="421" width="152" height="4" fill="url(#p_p)"/><rect x="1949" y="425" width="152" height="4" fill="url(#p_p)"/><rect x="1949" y="429" width="152" height="4" fill="url(#p_p)"/><rect x="1949" y="433" width="152" height="4" fill="url(#p_p)"/><rect x="1949" y="437" width="152" height="4" fill="url(#p_p)"/><rect x="1949" y="441" width="152" height="4" fill="url(#p_p)"/><rect x="1949" y="445" width="152" height="4" fill="url(#p_p)"/><rect x="1949" y="449" width="152" height="4" fill="url(#p_p)"/><rect x="1949" y="453" width="110" height="4" fill="url(#p_p)"/><rect x="1949" y="457" width="4" height="4" fill="url(#p_t)"/><rect x="1953" y="457" width="20" height="4" fill="url(#p_n)"/><rect x="1973" y="457" width="2" height="4" fill="url(#p_t)"/><rect x="1965" y="461" width="2" height="4" fill="url(#p_t)"/><rect x="1967" y="461" width="20" height="4" fill="url(#p_n)"/><rect x="1989" y="461" width="14" height="4" fill="url(#p_a)"/><rect x="2003" y="461" width="2" height="4" fill="url(#p_e)"/><rect x="2005" y="461" width="6" height="4" fill="url(#p_s)"/><rect x="2013" y="461" width="12" height="4" fill="url(#p_a)"/><rect x="2025" y="461" width="2" height="4" fill="url(#p_e)"/><rect x="2027" y="461" width="18" height="4" fill="url(#p_s)"/><rect x="2045" y="461" width="2" height="4" fill="url(#p_t)"/><rect x="2047" y="461" width="30" height="4" fill="url(#p_p)"/><rect x="2079" y="461" width="10" height="4" fill="url(#p_p)"/><rect x="2091" y="461" width="34" height="4" fill="url(#p_p)"/><rect x="2127" y="461" width="6" height="4" fill="url(#p_p)"/><rect x="1965" y="465" width="2" height="4" fill="url(#p_t)"/><rect x="1967" y="465" width="20" height="4" fill="url(#p_n)"/><rect x="1989" y="465" width="14" height="4" fill="url(#p_a)"/><rect x="2003" y="465" width="2" height="4" fill="url(#p_e)"/><rect x="2005" y="465" width="6" height="4" fill="url(#p_s)"/><rect x="2013" y="465" width="12" height="4" fill="url(#p_a)"/><rect x="2025" y="465" width="2" height="4" fill="url(#p_e)"/><rect x="2027" y="465" width="16" height="4" fill="url(#p_s)"/><rect x="2043" y="465" width="2" height="4" fill="url(#p_t)"/><rect x="2045" y="465" width="88" height="4" fill="url(#p_p)"/><rect x="1949" y="469" width="152" height="4" fill="url(#p_p)"/><rect x="1949" y="473" width="152" height="4" fill="url(#p_p)"/><rect x="1949" y="477" width="152" height="4" fill="url(#p_p)"/><rect x="1949" y="481" width="152" height="4" fill="url(#p_p)"/><rect x="1949" y="485" width="152" height="4" fill="url(#p_p)"/><rect x="1949" y="489" width="152" height="4" fill="url(#p_p)"/><rect x="1949" y="493" width="152" height="4" fill="url(#p_p)"/><rect x="1949" y="497" width="152" height="4" fill="url(#p_p)"/><rect x="1949" y="501" width="152" height="4" fill="url(#p_p)"/><rect x="1949" y="505" width="152" height="4" fill="url(#p_p)"/><rect x="1949" y="509" width="152" height="4" fill="url(#p_p)"/><rect x="1949" y="513" width="152" height="4" fill="url(#p_p)"/><rect x="1949" y="517" width="152" height="4" fill="url(#p_p)"/><rect x="1949" y="521" width="152" height="4" fill="url(#p_p)"/><rect x="1949" y="525" width="152" height="4" fill="url(#p_p)"/><rect x="1949" y="529" width="152" height="4" fill="url(#p_p)"/><rect x="1949" y="533" width="152" height="4" fill="url(#p_p)"/><rect x="1949" y="537" width="152" height="4" fill="url(#p_p)"/><rect x="1949" y="541" width="152" height="4" fill="url(#p_p)"/><rect x="1949" y="545" width="152" height="4" fill="url(#p_p)"/><rect x="1949" y="549" width="100" height="4" fill="url(#p_p)"/><rect x="1949" y="553" width="4" height="4" fill="url(#p_t)"/><rect x="1953" y="553" width="20" height="4" fill="url(#p_n)"/><rect x="1973" y="553" width="2" height="4" fill="url(#p_t)"/><rect x="1957" y="557" width="4" height="4" fill="url(#p_t)"/><rect x="1961" y="557" width="30" height="4" fill="url(#p_n)"/><rect x="1991" y="557" width="2" height="4" fill="url(#p_t)"/><rect x="1957" y="561" width="2" height="4" fill="url(#p_t)"/><rect x="1959" y="561" width="26" height="4" fill="url(#p_n)"/><rect x="1985" y="561" width="2" height="4" fill="url(#p_t)"/><rect x="1965" y="565" width="2" height="4" fill="url(#p_t)"/><rect x="1967" y="565" width="26" height="4" fill="url(#p_n)"/><rect x="1995" y="565" width="4" height="4" fill="url(#p_t)"/><rect x="1957" y="569" width="4" height="4" fill="url(#p_t)"/><rect x="1961" y="569" width="26" height="4" fill="url(#p_n)"/><rect x="1987" y="569" width="2" height="4" fill="url(#p_t)"/><rect x="1949" y="573" width="4" height="4" fill="url(#p_t)"/><rect x="1953" y="573" width="12" height="4" fill="url(#p_n)"/><rect x="1965" y="573" width="2" height="4" fill="url(#p_t)"/></svg>
    <!-- scrollbar -->
    <div class="abs" style="left:2134px;top:265px;width:1px;height:1215px;background:#2c2c2c;"></div>
    <div class="abs" style="left:2134px;top:265px;width:40px;height:280px;background:#434343;"></div>
    <div class="abs" style="left:2134px;top:265px;width:40px;height:5px;background:#5a5a5a;"></div>
    <div class="abs" style="left:2148px;top:265px;width:13px;height:16px;background:#9a9a9a;"></div>
    <div class="abs" style="left:2132px;top:438px;width:2px;height:5px;background:#6fb7e8;"></div>
    <div class="abs" style="left:2132px;top:446px;width:2px;height:3px;background:#6fb7e8;"></div>
    <div class="abs" style="left:2132px;top:456px;width:2px;height:4px;background:#6fb7e8;"></div>
    <div class="abs" style="left:2132px;top:490px;width:2px;height:19px;background:#6fb7e8;"></div>
    <div class="abs" style="left:2132px;top:542px;width:2px;height:3px;background:#d08a5a;"></div>
    <div class="abs" style="left:2132px;top:559px;width:2px;height:3px;background:#d08a5a;"></div>
    <div class="abs" style="left:2132px;top:692px;width:2px;height:4px;background:#d08a5a;"></div>
    <div class="abs" style="left:2132px;top:713px;width:2px;height:4px;background:#d08a5a;"></div>
    <div class="abs" style="left:2132px;top:743px;width:2px;height:4px;background:#d08a5a;"></div>
    <div class="abs" style="left:2132px;top:765px;width:2px;height:4px;background:#d08a5a;"></div>
    <div class="abs" style="left:2132px;top:1002px;width:2px;height:4px;background:#d0d0d0;"></div>
    <div class="abs" style="left:2132px;top:1015px;width:2px;height:7px;background:#d0d0d0;"></div>
    <div class="abs" style="left:2132px;top:1024px;width:2px;height:4px;background:#d0d0d0;"></div>
  </div>
  <div id="status" class="ui">
    <span style="left:1228.5px;letter-spacing:0.2px">Ln 1, Col 1</span>
    <span style="left:1454px;letter-spacing:-0.2px">Tab Size: 4</span>
    <span style="left:1676px;letter-spacing:0.6px">UTF-8</span>
    <span style="left:1827px;letter-spacing:-1.5px">LF</span>
    <span style="left:1918px;font-size:31px;top:-2px;letter-spacing:1.5px">{ }</span>
    <span style="left:1972px;letter-spacing:-0.6px">XML</span>
    
  </div>
<svg class="abs" style="left:0;top:0;pointer-events:none" width="2174" height="1544" viewBox="0 0 2174 1544">
  
  <!-- back / forward -->
  <path d="M554.5 37 L540.5 51 L554.5 65 M540.5 51 H573" fill="none" stroke="#cccccc" stroke-width="3"/>
  <path d="M631 37 L645 51 L631 65 M613 51 H645" fill="none" stroke="#8c8c8c" stroke-width="3"/>
  <!-- magnifier -->
  <circle cx="1051.8" cy="43.5" r="12.3" fill="none" stroke="#bdbdbd" stroke-width="2.7"/>
  <path d="M1043.5 52.8 L1030 68.5" fill="none" stroke="#bdbdbd" stroke-width="2.8"/>
  <!-- copilot title -->
  <g transform="translate(1557.5 29.7)" fill="#cccccc" style="--cut:#3c3c3c">
    <path d="M4.5 17.5 C1.5 20 0.4 24 0.4 28.5 C0.4 36 11 40.6 23.9 40.6 C36.8 40.6 47.4 36 47.4 28.5 C47.4 24 46.3 20 43.3 17.5 Z"/>
    <path fill="#3c3c3c" d="M9.5 15 H38.3 V32 C33 35 28 35.8 23.9 35.8 C19.8 35.8 15 35 9.5 32 Z"/>
    <rect x="5" y="0" width="19.3" height="20.2" rx="8.5"/>
    <rect x="23.5" y="0" width="19.3" height="20.2" rx="8.5"/>
    <rect fill="#3c3c3c" x="9.5" y="4.1" width="12.3" height="11.7" rx="4"/>
    <rect fill="#3c3c3c" x="26.3" y="4.1" width="12.3" height="11.7" rx="4"/>
    <rect x="16.6" y="23" width="4.6" height="9" rx="2.3"/>
    <rect x="26.6" y="23" width="4.6" height="9" rx="2.3"/>
  </g>
  <path d="M1618 45.5 L1627.5 55 L1637 45.5" fill="none" stroke="#cccccc" stroke-width="2.4"/>
  <!-- fullscreen -->
  <path d="M2017.6 44 V35.3 Q2017.6 33.8 2019.1 33.8 H2028 M2039 33.8 H2047.9 Q2049.4 33.8 2049.4 35.3 V44 M2049.4 55.5 V64.7 Q2049.4 66.2 2047.9 66.2 H2039 M2028 66.2 H2019.1 Q2017.6 66.2 2017.6 64.7 V55.5" fill="none" stroke="#cccccc" stroke-width="3.2"/>
  <!-- pin -->
  <path d="M2088.5 51.7 L2091 50.6 H2101.6 V52.8 H2091 Z" fill="#cccccc"/>
  <path d="M2101.6 39.8 V63.2 C2105.5 63.2 2108.2 61 2109.7 57.2 H2119.5 L2124.3 60.5 V42.2 L2119.5 45.4 H2109.7 C2108.2 41.8 2105.5 39.8 2101.6 39.8 Z" fill="none" stroke="#cccccc" stroke-width="2.8" stroke-linejoin="round"/>
  <!-- tab rss -->
  <g fill="#d9824a">
    <circle cx="48.9" cy="158.9" r="3.2"/>
    <path d="M45.8 149.5 A12.5 12.5 0 0 1 58.3 162" fill="none" stroke="#d9824a" stroke-width="5"/>
    <path d="M45.8 142 A20 20 0 0 1 65.8 162" fill="none" stroke="#d9824a" stroke-width="5"/>
  </g>
  <!-- tab close -->
  <path d="M354.5 139.5 L376.5 162 M376.5 139.5 L354.5 162" fill="none" stroke="#ffffff" stroke-width="2.8"/>
  <!-- split editor -->
  <rect x="1942.7" y="132.2" width="34.4" height="34.1" rx="2.5" fill="none" stroke="#cccccc" stroke-width="3"/>
  <path d="M1959.9 132.5 V166" stroke="#cccccc" stroke-width="3"/>
  <!-- lock -->
  <rect x="2017.5" y="149.4" width="32" height="20" rx="3.5" fill="none" stroke="#cccccc" stroke-width="3"/>
  <path d="M2023.5 149 V142.5 A10.3 10.3 0 0 1 2043.3 138.3" fill="none" stroke="#cccccc" stroke-width="3"/>
  <!-- more -->
  <circle cx="2094" cy="150.9" r="3.1" fill="#cccccc"/>
  <circle cx="2108.3" cy="150.9" r="3.1" fill="#cccccc"/>
  <circle cx="2122.9" cy="150.9" r="3.1" fill="#cccccc"/>
  <!-- breadcrumb chevrons -->
  <path d="M164.5 220.5 L177 233.5 L164.5 246.5 M283.5 220.5 L296 233.5 L283.5 246.5 M475 220.5 L487.5 233.5 L475 246.5" fill="none" stroke="#a9a9a9" stroke-width="2.6"/>
  <!-- breadcrumb rss -->
  <g fill="#d9824a">
    <circle cx="522.2" cy="241.5" r="3"/>
    <path d="M519.3 232.7 A11.7 11.7 0 0 1 531 244.4" fill="none" stroke="#d9824a" stroke-width="4.6"/>
    <path d="M519.3 225.6 A18.8 18.8 0 0 1 538.1 244.4" fill="none" stroke="#d9824a" stroke-width="4.6"/>
  </g>
  <!-- status copilot -->
  <g transform="translate(2090.8 1494) scale(0.87)" fill="#ffffff">
    <path d="M4.5 17.5 C1.5 20 0.4 24 0.4 28.5 C0.4 36 11 40.6 23.9 40.6 C36.8 40.6 47.4 36 47.4 28.5 C47.4 24 46.3 20 43.3 17.5 Z"/>
    <path fill="#5f2575" d="M9.5 15 H38.3 V32 C33 35 28 35.8 23.9 35.8 C19.8 35.8 15 35 9.5 32 Z"/>
    <rect x="5" y="0" width="19.3" height="20.2" rx="8.5"/>
    <rect x="23.5" y="0" width="19.3" height="20.2" rx="8.5"/>
    <rect fill="#5f2575" x="9.5" y="4.1" width="12.3" height="11.7" rx="4"/>
    <rect fill="#5f2575" x="26.3" y="4.1" width="12.3" height="11.7" rx="4"/>
    <rect x="16.6" y="23" width="4.6" height="9" rx="2.3"/>
    <rect x="26.6" y="23" width="4.6" height="9" rx="2.3"/>
  </g>
</svg>

</div>
</body></html>
